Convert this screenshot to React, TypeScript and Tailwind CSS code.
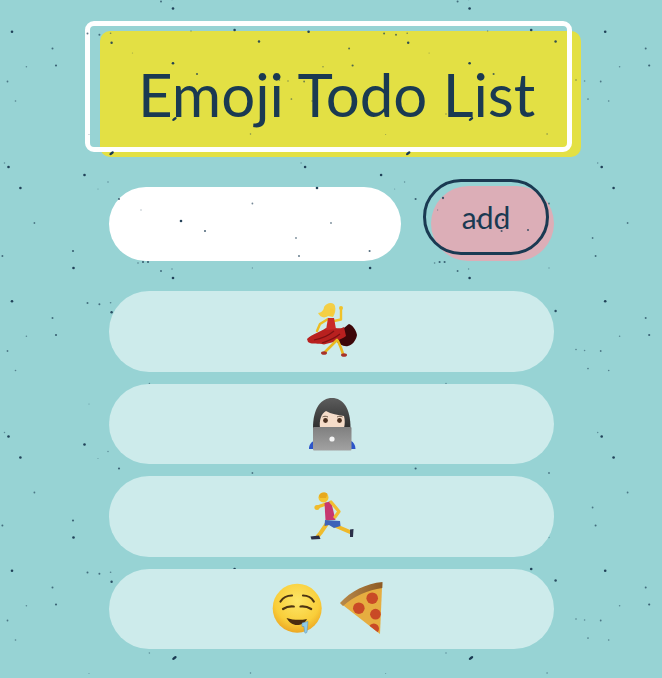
import React from "react";

const TILE_W = 296.6;
const TILE_H = 269.5;
// x, y, strength within one repeating tile of the paper grain
const tile: [number, number, number][] = [
  [4.5,163,.3],[8.5,167,1],[84.5,175,1],[108,182,.3],[98,189,.15],[73,251,.7],[73.5,268,1],
  [87.5,33.5,.6],[52.5,48.5,.6],[56,65.5,.7],[7.5,81.5,.5],[15.5,101,.4],[89,134.5,.15],
  [110.6,33.3,.4],[111.6,42.7,.9],[173,63.3,1],[197,74,.7],[234.6,30,1],[191,31,.25],[12,31.7,1],
  [132.5,53,.15],[250.5,134,.35],[288,81,.35],[291.4,99,.45],[26.4,66.7,.35],[99.4,34.7,.6],
  [149.4,114,.3],[20.4,188,1],[119,199,.7],[141,210,.2],[181,221,1],[205,231,.7],[296,238,.5],
  [34.4,223,.5],[2.4,256,.6],[138,263,.4],[143,262,.7],[148,262,.7],[161,1.5,.6],[172,269,.3],
  [173,8.5,1],[259,41.5,.9],[279.4,80,.4],[252.4,203.5,.5],[252.4,268,.2],
];
const extras: [number, number, number][] = [[443,198,.8],[528,230,.7],[503,220,1]];

function Grain() {
  const dots: React.ReactElement[] = [];
  for (let i = 0; i < 3; i++) {
    for (let j = -1; j < 3; j++) {
      tile.forEach(([x, y, s], k) => {
        const cx = x + i * TILE_W;
        const cy = y + j * TILE_H;
        if (cx > 662 || cy > 678 || cy < -2) return;
        dots.push(<circle key={`${i}-${j}-${k}`} cx={cx} cy={cy} r={0.5 + s * 0.8} fill="#1a3a52" opacity={0.25 + s * 0.7} />);
      });
      for (const [x, y] of [[174.4, 119], [111.6, 153.3]]) {
        const cx = x + i * TILE_W;
        const cy = y + j * TILE_H;
        if (cx > 662 || cy > 678 || cy < -2) continue;
        dots.push(<ellipse key={`e${i}-${j}-${x}`} cx={cx} cy={cy} rx={2.6} ry={1.3} fill="#1a3a52" transform={`rotate(-35 ${cx} ${cy})`} />);
      }
    }
  }
  return (
    <svg className="absolute inset-0 z-[5] pointer-events-none" width="662" height="678" viewBox="0 0 662 678">
      {dots}
      {extras.map(([x, y, s]) => (
        <circle key={`${x}`} cx={x} cy={y} r={0.5 + s * 0.8} fill="#1a3a52" opacity={0.25 + s * 0.7} />
      ))}
    </svg>
  );
}

function Dancer() {
  return (
    <svg width="64" height="64" viewBox="0 0 64 64" role="img" aria-label="💃">
      <path d="M38 31C43 31 46 27 49 25C52 26 56 30 57 36C56 42 52 46 48 47C44 48 38 45 34 40Z" fill="#3d0709" />
      <path d="M7 40C12 35 20 33 26 29L35 29C38 29 41 30 44 28L46 37C41 41 31 44 24 45.5C18 44 13 46 8 43Z" fill="#b8201f" />
      <path d="M14 41C20 40 28 37 34 32M22 44C28 42 34 40 40 35" stroke="#7c1113" strokeWidth="1.2" fill="none" />
      <path d="M37 41L31 47L25 53M38 42L41 49L43 55" stroke="#e9b91f" strokeWidth="2.6" fill="none" strokeLinecap="round" strokeLinejoin="round" />
      <ellipse cx="24" cy="54" rx="3" ry="1.8" fill="#a8322a" />
      <ellipse cx="44" cy="56" rx="3" ry="1.8" fill="#a8322a" />
      <path d="M34 22L41 20.5L41 10" stroke="#f0c22a" strokeWidth="2.4" fill="none" strokeLinecap="round" strokeLinejoin="round" />
      <circle cx="41" cy="9" r="2" fill="#f0c22a" />
      <path d="M28 20L20 25L17 32" stroke="#ecbd22" strokeWidth="2.4" fill="none" strokeLinecap="round" strokeLinejoin="round" />
      <path d="M28 19L34 19L36 30L26 31Z" fill="#c92a28" />
      <path d="M24 8C27 3 34 3 35 7C36 11 35 15 33 18L28 17C24 20 20 18 18 14C21 14 24 11 24 8Z" fill="#f4cf45" />
      <path d="M30 10C32 9 34 10 34 12C34 15 32 17 30 17Z" fill="#f6cc3a" />
    </svg>
  );
}

function Technologist() {
  return (
    <svg width="64" height="64" viewBox="0 0 64 64" role="img" aria-label="👩🏻‍💻">
      <defs>
        <linearGradient id="hair" x1="0" y1="0" x2="0" y2="1">
          <stop offset="0" stopColor="#5c5c5c" />
          <stop offset="1" stopColor="#2e2e2e" />
        </linearGradient>
        <linearGradient id="lap" x1="0" y1="0" x2="0" y2="1">
          <stop offset="0" stopColor="#7f7f7f" />
          <stop offset="1" stopColor="#a2a2a2" />
        </linearGradient>
      </defs>
      <path d="M9 57C9 53 11 50 14 49L14 57ZM55.5 57C55.5 53 53.5 50 51 49L51 57Z" fill="#2c55c9" />
      <path d="M13 36C13 16 21 6 32 6C43 6 50.5 16 50.5 36Z" fill="url(#hair)" />
      <path d="M20 36C19 28 21 22 26 19C31 22 38 23 44 24C45 28 45 32 44 36Z" fill="#f5dcc9" />
      <circle cx="25.5" cy="28.5" r="2.4" fill="#4a3020" />
      <circle cx="39.5" cy="28.5" r="2.4" fill="#4a3020" />
      <path d="M22.5 25C24 24 26 24 28 25M37 25C39 24 41 24 42.5 25" stroke="#5a4636" strokeWidth="0.9" fill="none" />
      <rect x="13" y="35" width="38.5" height="23.5" rx="1" fill="url(#lap)" />
      <circle cx="32" cy="47" r="2.6" fill="#f4f4f4" />
    </svg>
  );
}

function Runner() {
  return (
    <svg width="64" height="64" viewBox="0 0 64 64" role="img" aria-label="🏃">
      <path d="M26 20L17.5 23" stroke="#efb92a" strokeWidth="3.4" strokeLinecap="round" fill="none" />
      <circle cx="17" cy="23.5" r="2.6" fill="#f0bb2b" />
      <path d="M36 42L50 48" stroke="#efb92a" strokeWidth="4" strokeLinecap="round" fill="none" />
      <path d="M50 45.5L53.5 45L53 53L50 53Z" fill="#2b2f48" />
      <path d="M28 38L20.5 49L18 52" stroke="#f0bc2c" strokeWidth="4" strokeLinecap="round" strokeLinejoin="round" fill="none" />
      <path d="M10.5 52.5L19 51.5L20.5 55L11.5 55.5Z" fill="#2b2f48" />
      <path d="M25 36L40 37L40.5 42L34 44L29 41L24.5 42Z" fill="#3d62b8" />
      <path d="M24.5 19L31 17L35.5 36L25.5 36Z" fill="#c7376f" />
      <path d="M31 18L39 27.5L35 33" stroke="#f2be30" strokeWidth="3.2" strokeLinecap="round" strokeLinejoin="round" fill="none" />
      <circle cx="23.5" cy="13.5" r="5" fill="#f3c432" />
      <path d="M19 12C20 8 26 7.5 27.5 10L26 14L20 14Z" fill="#e7a91e" />
    </svg>
  );
}

function Drool() {
  return (
    <svg width="64" height="64" viewBox="0 0 64 64" role="img" aria-label="🤤">
      <defs>
        <radialGradient id="face" cx="0.5" cy="0.35" r="0.7">
          <stop offset="0" stopColor="#fde667" />
          <stop offset="0.65" stopColor="#f9ce3a" />
          <stop offset="1" stopColor="#e99d1c" />
        </radialGradient>
      </defs>
      <circle cx="29.2" cy="31.2" r="24.5" fill="url(#face)" />
      <g stroke="#4d3412" strokeWidth="2.2" fill="none" strokeLinecap="round">
        <path d="M12.5 24.5C15 20.5 19 18.5 24 18.5" />
        <path d="M35 18.5C40 18.5 43.5 20.5 45.8 24.5" />
        <path d="M15 32C18 30 22 29 25.8 29.5" />
        <path d="M32.5 29.5C36 29 40 30 43.2 32" />
      </g>
      <path d="M18.5 41C25 43 32 43.5 39 42C37 46 33 48 29 48C25 48 21 45.5 18.5 41Z" fill="#4a2c10" />
      <path d="M34 46L40 44.5L39 55C38.6 56.5 36.8 56.5 36.5 55L36 49.5L34 49.5Z" fill="#8ecbe8" stroke="#5e8fb0" strokeWidth="0.5" />
    </svg>
  );
}

function Pizza() {
  return (
    <svg width="64" height="64" viewBox="0 0 64 64" role="img" aria-label="🍕">
      <defs>
        <clipPath id="slice">
          <path d="M8.5 26.2C20 16 34 9 50.2 6.2L48 57Z" />
        </clipPath>
        <linearGradient id="crust" x1="0" y1="0" x2="1" y2="0">
          <stop offset="0" stopColor="#b98a4a" />
          <stop offset="1" stopColor="#8d5a24" />
        </linearGradient>
      </defs>
      <path d="M8.5 26.2C20 16 34 9 50.2 6.2L48 57Z" fill="#e6ad40" />
      <path d="M8 26C19 14 34 6.5 50.5 5L50.3 11C36 13 22 19 11 29Z" fill="url(#crust)" />
      <g clipPath="url(#slice)" fill="#c94a26">
        <circle cx="40.2" cy="21.2" r="5.8" />
        <circle cx="26.8" cy="31.2" r="5.8" />
        <circle cx="43.5" cy="37.2" r="5.4" />
        <circle cx="41.8" cy="51.8" r="5.2" />
      </g>
    </svg>
  );
}

function Row({ children }: { children: React.ReactNode }) {
  return (
    <li className="relative z-10 flex h-[80.5px] w-[445px] items-center justify-center rounded-[40px] bg-[#cdebeb]">
      {children}
    </li>
  );
}

export default function App() {
  return (
    <div
      className="relative h-[678px] w-full overflow-hidden bg-[#97d3d4] text-[#1a3a52]"
      style={{ fontFamily: '"Lato", "Noto Sans", sans-serif' }}
    >
      <Grain />
      <header className="relative ml-[100px] mt-[31px] flex h-[126px] w-[481px] items-center rounded-[10px] bg-[#e3e044] pl-[38px]">
        <div className="absolute -left-[15px] -top-[10px] h-[131px] w-[487px] rounded-[9px] border-[5px] border-white" />
        <h1 className="whitespace-nowrap text-[60px] font-normal leading-none">Emoji Todo List</h1>
      </header>
      <form className="ml-[109px] mt-[30px] flex items-start">
        <input className="h-[74px] w-[292px] rounded-full bg-white outline-none" aria-label="todo" />
        <div className="relative ml-[30px] h-[75px] w-[123px] -translate-y-px rounded-full bg-[#dcaeb7]">
          <button
            type="button"
            className="absolute -left-[8px] -top-[7px] h-[76px] w-[126px] rounded-full border-[3px] border-[#1a3a52] text-[30px] leading-none"
          >
            add
          </button>
        </div>
      </form>
      <ul className="ml-[109px] mt-[29px] flex flex-col gap-[12px]">
        <Row><Dancer /></Row>
        <Row><Technologist /></Row>
        <Row><Runner /></Row>
        <Row>
          <Drool />
          <Pizza />
        </Row>
      </ul>
    </div>
  );
}
